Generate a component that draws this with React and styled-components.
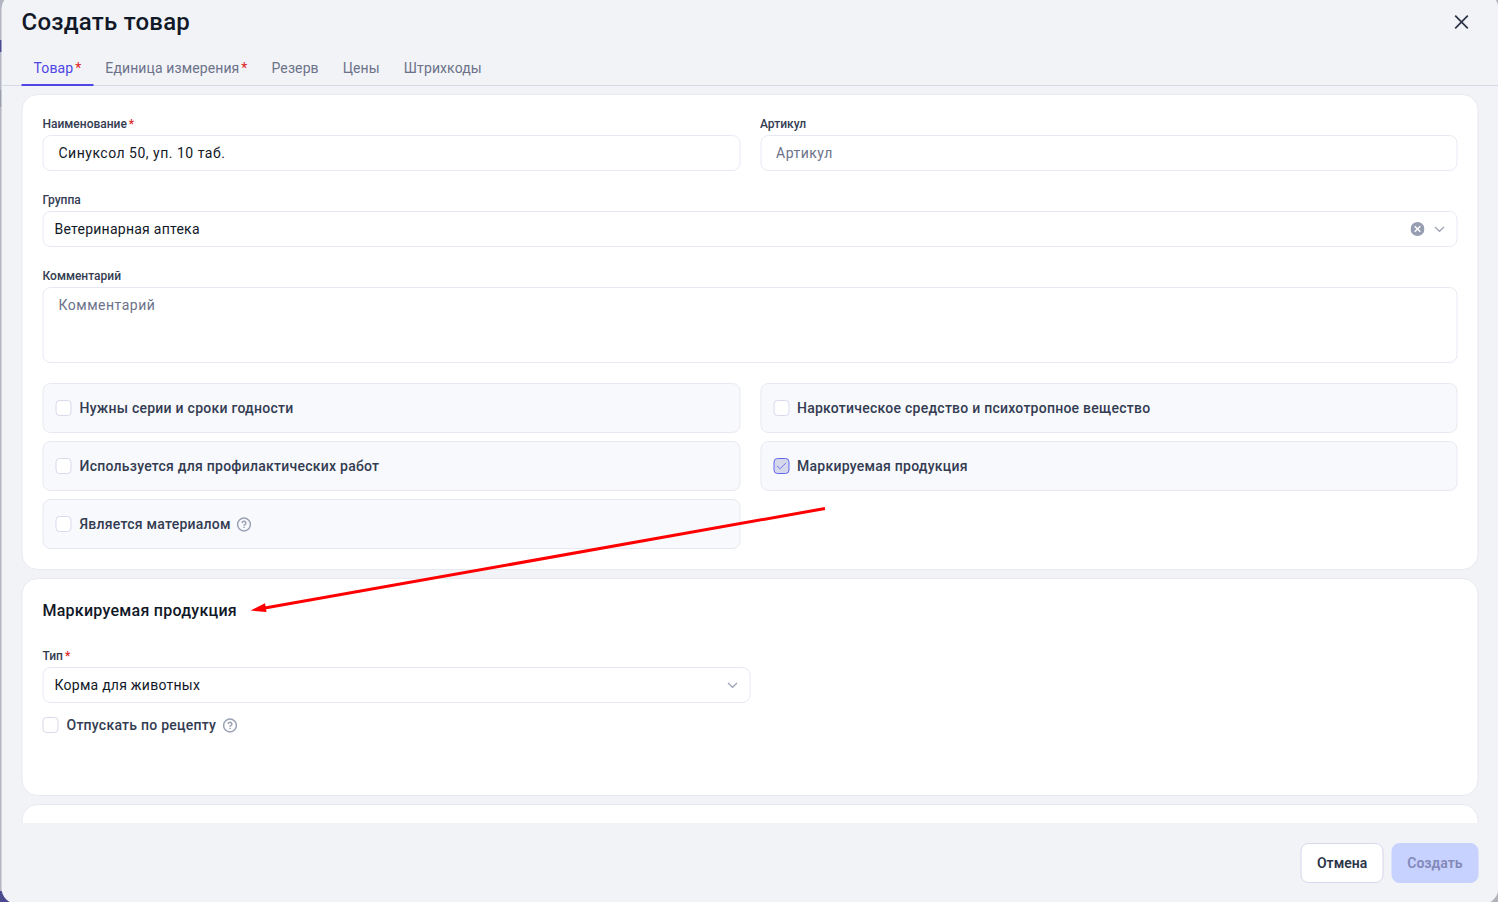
import * as React from 'react';
import styled, { createGlobalStyle, css } from 'styled-components';

const GlobalStyle = createGlobalStyle`
  *,
  *::before,
  *::after {
    box-sizing: border-box;
  }

  body {
    margin: 0;
    overflow: hidden;
    font-family: Roboto, "Liberation Sans", sans-serif;
    color: #111827;
  }
`;

const Backdrop = styled.div`
  position: relative;
  width: 1498px;
  height: 902px;
  overflow: hidden;
  display: flex;
  align-items: flex-start;
  background: linear-gradient(#b3b5c2 0 40px, #4c4a93 40px 52px, #b3b5c2 52px 90px, #9a9dac 90px 107px, #b3b5c2 107px 891px, #4c4a8f 891px);
`;

const CornerShade = styled.div`
  position: absolute;
  right: 0;
  bottom: 0;
  width: 40px;
  height: 40px;
  background: #b1b2b9;
`;

const Dialog = styled.div`
  position: relative;
  flex: none;
  display: flex;
  flex-direction: column;
  width: 1497px;
  height: 911px;
  margin: -7px 0 0 1px;
  border-radius: 16px;
  overflow: hidden;
  background: #f2f3f7;
  transform: translateX(0.5px);
`;

const Header = styled.header`
  flex: none;
  display: flex;
  align-items: center;
  justify-content: space-between;
  height: 58px;
  padding: 0 29.5px 0 20px;
`;

const Title = styled.h1`
  margin: 0;
  font-size: 24px;
  line-height: 32px;
  font-weight: 500;
  letter-spacing: 0.24px;
`;

const CloseButton = styled.button`
  display: flex;
  padding: 0;
  border: 0;
  background: none;
  color: #2d3548;
`;

const Tabs = styled.nav`
  flex: none;
  display: flex;
  height: 35px;
  padding: 0 20px;
  border-bottom: 1px solid #d6d8e8;
`;

const Tab = styled.div`
  height: 35px;
  padding: 7px 12px 0;
  font-size: 14px;
  line-height: 20px;
  letter-spacing: 0.11px;
  color: #6b7289;

  ${props => props.$active && css`
    color: #4f46e5;
    border-bottom: 2px solid #4f46e5;
  `}
`;

const Asterisk = styled.span`
  margin-left: 2px;
  color: #dc2626;
`;

const Body = styled.main`
  flex: none;
  display: flex;
  flex-direction: column;
  gap: 8px;
  height: 737px;
  padding: 8px 20px 0;
  overflow: hidden;
`;

const Card = styled.section`
  flex: none;
  display: flex;
  flex-direction: column;
  min-height: ${props => props.$minHeight || 0}px;
  padding: 20px;
  border: 1px solid #e8e9f0;
  border-radius: 16px;
  background: #fff;
`;

const Grid = styled.div`
  display: grid;
  grid-template-columns: 1fr 1fr;
  gap: ${props => props.$rowGap || 20}px 20px;
`;

const FieldBox = styled.div`
  grid-column: ${props => (props.$wide ? '1 / -1' : 'auto')};
`;

const Label = styled.div`
  height: 20px;
  font-size: 12px;
  line-height: 18px;
  font-weight: 500;
  letter-spacing: 0;
  color: #333c52;
`;

const Control = styled.div`
  display: flex;
  align-items: ${props => (props.$multiline ? 'flex-start' : 'center')};
  height: ${props => (props.$multiline ? 76 : 36)}px;
  padding: ${props => (props.$multiline ? '7px 15px' : '0 15px')};
  border: 1px solid #e8e8f4;
  border-radius: 8px;
  background: #fff;
  font-size: 14px;
  line-height: 20px;
  letter-spacing: 0.5px;
  color: ${props => (props.$placeholder ? '#6b7289' : '#111827')};
`;

const SelectControl = styled(Control)`
  gap: 7px;
  padding: 0 9px 0 11px;
  letter-spacing: 0.25px;
`;

const SelectValue = styled.span`
  flex: 1;
`;

const HalfWidth = styled.div`
  width: 50%;
`;

const CheckLabel = styled.label`
  display: flex;
  align-items: center;
  height: 24px;
  font-size: 14px;
  line-height: 20px;
  font-weight: 500;
  letter-spacing: 0.25px;
  color: #333c52;

  ${props => props.$boxed && css`
    height: 50px;
    padding: 0 12px;
    border: 1px solid #e8e9f0;
    border-radius: 8px;
    background: #f8f9fd;
  `}
`;

const CheckMark = styled.span`
  flex: none;
  display: flex;
  align-items: center;
  justify-content: center;
  width: 16px;
  height: 16px;
  margin-right: 8px;
  border: 1px solid ${props => (props.$checked ? '#6366f1' : '#d9d9ec')};
  border-radius: 4px;
  background: ${props => (props.$checked ? '#d5d7ea' : '#fff')};
`;

const HelpSvg = styled.svg`
  margin-left: 6px;
`;

const SectionTitle = styled.h2`
  margin: 0 0 24px;
  font-size: 16px;
  line-height: 24px;
  font-weight: 500;
  letter-spacing: 0.25px;
`;

const CheckRow = styled.div`
  margin-top: 10px;
`;

const Footer = styled.footer`
  display: flex;
  justify-content: flex-end;
  gap: 8px;
  padding: 20px 20px 0;
`;

const Button = styled.button`
  height: 40px;
  padding: 0 15px;
  border: 1px solid ${props => (props.$primary ? '#c7d2fe' : '#d6d6ec')};
  border-radius: 8px;
  background: ${props => (props.$primary ? '#c7d2fe' : '#fff')};
  color: ${props => (props.$primary ? '#8288b9' : '#2d3548')};
  font: 600 14px/20px Roboto, "Liberation Sans", sans-serif;
`;

const Arrow = styled.svg`
  position: absolute;
  left: 0;
  top: 0;
  pointer-events: none;
`;

const HelpIcon = () => (
  <HelpSvg width="15" height="15" viewBox="0 0 15 15" fill="none" stroke="#9aa1b5" strokeWidth="1.5">
    <circle cx="7.5" cy="7.5" r="6.4" />
    <path d="M5.7 6.1a1.85 1.85 0 1 1 2.6 1.65c-.55.25-.8.5-.8 1.05" />
    <path d="M7.5 9.7v1.4" />
  </HelpSvg>
);

const ChevronIcon = () => (
  <svg width="16" height="16" viewBox="0 0 16 16" fill="none" stroke="#9ca3b5" strokeWidth="1.2">
    <path d="M3.5 6 8 10.3 12.5 6" />
  </svg>
);

const ClearIcon = () => (
  <svg width="14" height="14" viewBox="0 0 14 14">
    <circle cx="7" cy="7" r="7" fill="#979eb2" />
    <path d="m4.2 4.2 5.6 5.6m0-5.6L4.2 9.8" stroke="#fff" strokeWidth="1.4" />
  </svg>
);

const Field = ({ label, required, wide, children }) => (
  <FieldBox $wide={wide}>
    <Label>
      {label}
      {required && <Asterisk>*</Asterisk>}
    </Label>
    {children}
  </FieldBox>
);

const Check = ({ label, checked, boxed, help }) => (
  <CheckLabel $boxed={boxed}>
    <CheckMark $checked={checked}>
      {checked && (
        <svg width="10" height="8" viewBox="0 0 10 8" fill="none" stroke="#7477ee" strokeWidth="1">
          <path d="M.5 3.8 3.6 6.8 9.5 .9" />
        </svg>
      )}
    </CheckMark>
    {label}
    {help && <HelpIcon />}
  </CheckLabel>
);

const TABS = [
  { title: 'Товар', required: true, active: true },
  { title: 'Единица измерения', required: true },
  { title: 'Резерв' },
  { title: 'Цены' },
  { title: 'Штрихкоды' }
];

export default function App() {
  return (
    <Backdrop>
      <GlobalStyle />
      <CornerShade />
      <Dialog>
        <Header>
          <Title>Создать товар</Title>
          <CloseButton aria-label="Закрыть">
            <svg width="16" height="16" viewBox="0 0 16 16" fill="none" stroke="currentColor" strokeWidth="1.7">
              <path d="m1.7 1.7 12.6 12.6m0-12.6L1.7 14.3" />
            </svg>
          </CloseButton>
        </Header>
        <Tabs>
          {TABS.map(tab => (
            <Tab key={tab.title} $active={tab.active}>
              {tab.title}
              {tab.required && <Asterisk>*</Asterisk>}
            </Tab>
          ))}
        </Tabs>
        <Body>
          <Card>
            <Grid>
              <Field label="Наименование" required>
                <Control>Синуксол 50, уп. 10 таб.</Control>
              </Field>
              <Field label="Артикул">
                <Control $placeholder>Артикул</Control>
              </Field>
              <Field label="Группа" wide>
                <SelectControl>
                  <SelectValue>Ветеринарная аптека</SelectValue>
                  <ClearIcon />
                  <ChevronIcon />
                </SelectControl>
              </Field>
              <Field label="Комментарий" wide>
                <Control $multiline $placeholder>Комментарий</Control>
              </Field>
              <FieldBox $wide>
                <Grid $rowGap={8}>
                  <Check boxed label="Нужны серии и сроки годности" />
                  <Check boxed label="Наркотическое средство и психотропное вещество" />
                  <Check boxed label="Используется для профилактических работ" />
                  <Check boxed checked label="Маркируемая продукция" />
                  <Check boxed help label="Является материалом" />
                </Grid>
              </FieldBox>
            </Grid>
          </Card>
          <Card $minHeight={218}>
            <SectionTitle>Маркируемая продукция</SectionTitle>
            <HalfWidth>
              <Field label="Тип" required>
                <SelectControl>
                  <SelectValue>Корма для животных</SelectValue>
                  <ChevronIcon />
                </SelectControl>
              </Field>
            </HalfWidth>
            <CheckRow>
              <Check help label="Отпускать по рецепту" />
            </CheckRow>
          </Card>
          <Card $minHeight={100} />
        </Body>
        <Footer>
          <Button>Отмена</Button>
          <Button $primary disabled>Создать</Button>
        </Footer>
      </Dialog>
      <Arrow width="1498" height="902" viewBox="0 0 1498 902">
        <path d="M825 508.5 262 608.6" stroke="#f00" strokeWidth="3" />
        <path d="M250.5 610.6 265 603.3 266.5 612Z" fill="#f00" />
      </Arrow>
    </Backdrop>
  );
}
